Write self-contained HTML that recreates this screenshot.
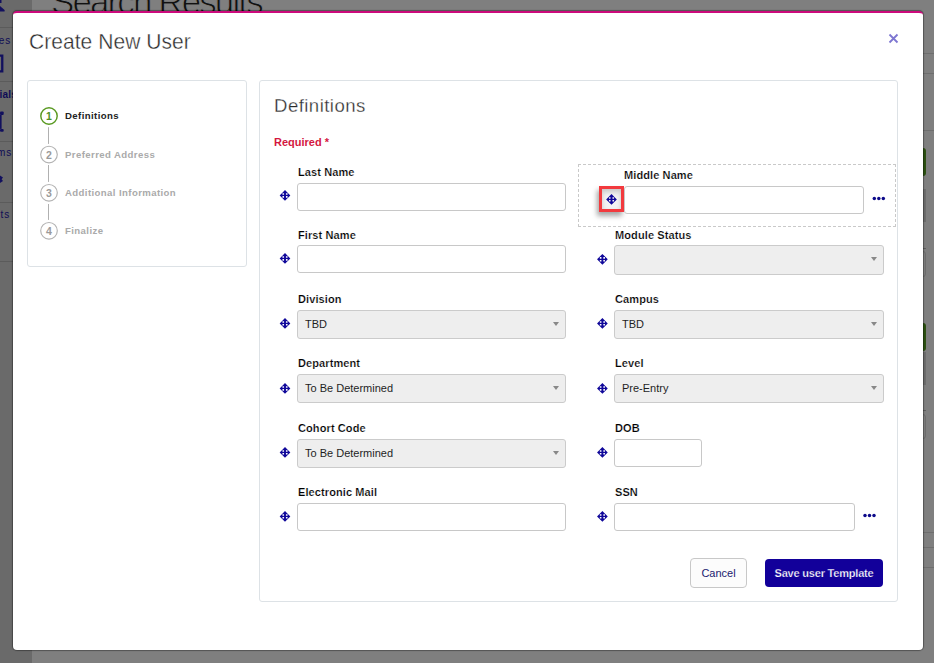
<!DOCTYPE html>
<html><head><meta charset="utf-8">
<style>
*{box-sizing:border-box;margin:0;padding:0}
html,body{width:934px;height:663px;overflow:hidden}
body{position:relative;background:#7f7f7f;font-family:"Liberation Sans",sans-serif;color:#333}
body>div,body>svg{position:absolute}
.abs{position:absolute}
#side{left:0;top:0;width:32px;height:663px;background:#6a6a6a}
.sl{left:0;width:32px;height:1px;background:#5b5b5b}
.st{font-size:10px;color:#0e0c55;white-space:nowrap;letter-spacing:0.8px;line-height:12px}
#search{left:51px;top:-17px;font-size:35px;line-height:38px;color:#111;white-space:nowrap;letter-spacing:-1.9px;-webkit-text-stroke:0.9px #7f7f7f}
.rl{left:923px;width:11px;height:1px;background:#6e6e6e}
#modal{left:13px;top:11px;width:910px;height:639px;background:#fff;border-top:2px solid #cc0a7c;border-radius:4px;box-shadow:0 0 1px 1px rgba(0,0,0,.35)}
#title{left:29px;top:28px;font-size:21px;color:#2a2a2a;white-space:nowrap;letter-spacing:0.05px;line-height:24px;-webkit-text-stroke:0.35px #fff;transform:scaleY(1.08);transform-origin:0 0}
#close{left:888px;top:33px}
#steps{left:27px;top:80px;width:220px;height:187px;border:1px solid #dde2e6;border-radius:3px}
.num{left:43px;width:12px;height:12px;font-size:10.5px;font-weight:bold;color:#9a9a9a;text-align:center;line-height:12px}
.num.on{color:#4f8f1f}
.stxt{left:65px;font-size:9.6px;font-weight:bold;color:#aaa;white-space:nowrap;line-height:12px;letter-spacing:0.4px}
.stxt.on{color:#222}
#panel{left:259px;top:80px;width:639px;height:522px;border:1px solid #dde2e6;border-radius:3px}
#deft{left:274px;top:96px;font-size:18.6px;color:#2a2a2a;white-space:nowrap;line-height:20px;letter-spacing:0.45px;-webkit-text-stroke:0.3px #fff}
#req{left:274px;top:136px;font-size:11px;font-weight:bold;color:#d4173f;white-space:nowrap;line-height:12px}
.lab{font-size:11px;font-weight:bold;color:#000;white-space:nowrap;line-height:12px;-webkit-text-stroke:0.2px #fff;letter-spacing:0.1px}
.inp{background:#fff;border:1px solid #c8c8c8;border-radius:3px}
.sel{background:#eee;border:1px solid #cbcbcb;border-radius:3px;font-size:11px;color:#1e1e1e;line-height:12px}
.sel span{position:absolute;left:7px;top:7px;white-space:nowrap}
.sel i{position:absolute;right:6px;top:11px;width:0;height:0;border-left:3px solid transparent;border-right:3px solid transparent;border-top:4px solid #888}
#dash{left:578px;top:164px;width:318px;height:63px;border:1px dashed #c9c9c9}
#redbox{left:599px;top:186px;width:25px;height:26px;border:3px solid #f23a3e;background:#f3f3f3;box-shadow:-2px 4px 5px rgba(0,0,0,.35), inset 0 3px 5px rgba(0,0,0,.18)}
#cancel{left:690px;top:558px;width:57px;height:30px;border:1px solid #c8c8c8;border-radius:4px;background:#fcfcfc;font-size:11px;color:#1b1b70;text-align:center;line-height:28px}
#save{left:765px;top:559px;width:118px;height:28px;border-radius:4px;background:#12009a;font-size:11px;font-weight:bold;color:#fff;text-align:center;line-height:28px;letter-spacing:-0.2px;-webkit-text-stroke:0.25px #12009a}

</style></head>
<body>
<div id="side"></div>
<div class="sl" style="top:27px"></div>
<div class="sl" style="top:81px"></div>
<div class="sl" style="top:141px"></div>
<div class="sl" style="top:202px"></div>
<div class="sl" style="top:261px"></div>
<div class="st" style="right:923px;top:35px">Cases</div>
<div class="st" style="right:917px;top:89px;font-weight:bold;letter-spacing:0.2px">Credentials</div>
<div class="st" style="right:922px;top:147px">Forms</div>
<div class="st" style="right:924px;top:209px">Reports</div>
<svg style="left:0;top:0" width="12" height="190">
<g fill="#12105e">
<rect x="0" y="0" width="1.5" height="3"/>
<path d="M0 6L4 9.5Q5.2 10.6 4.5 11.5H0Z"/>
<path d="M-8 54.5H3.4V72.5H-8V70.2H1.1V56.8H-8Z"/>
<rect x="0" y="111.5" width="3.7" height="3.4" rx="1"/>
<rect x="0" y="114.9" width="1.6" height="14"/>
<rect x="0" y="129" width="3.7" height="2.8" rx="1"/>
<path d="M0 175.5L3 177.5L1.6 179.2L3 181L0 183Z"/>
</g></svg>

<div id="search">Search Results</div>
<div class="rl" style="top:53px"></div>
<div class="rl" style="top:73px"></div>
<div class="rl" style="top:130px"></div>
<div class="rl" style="top:532px"></div>
<div class="rl" style="top:547px"></div>
<div class="rl" style="top:567px"></div>
<div class="abs" style="left:920px;top:248px;width:6px;height:1px;background:#5e5e5e"></div>
<div class="abs" style="left:920px;top:410px;width:6px;height:1px;background:#5e5e5e"></div>
<div class="abs" style="left:900px;top:251px;width:26px;height:26px;border:1px solid #6c6c6c;border-radius:3px"></div>
<div class="abs" style="left:900px;top:414px;width:26px;height:25px;border:1px solid #6c6c6c;border-radius:3px"></div>
<div class="abs" style="left:920px;top:148px;width:6px;height:28px;background:#2b5010;border-radius:3px"></div>
<div class="abs" style="left:920px;top:323px;width:6px;height:28px;background:#2b5010;border-radius:3px"></div>
<div class="abs" style="left:923px;top:189px;width:3px;height:33px;background:#6c6c6c"></div>
<div class="abs" style="left:923px;top:352px;width:3px;height:33px;background:#6c6c6c"></div>
<div id="modal"></div>
<div id="title">Create New User</div>
<svg id="close" width="11" height="11" viewBox="0 0 11 11"><path d="M1.5 1.5L9.5 9.5M9.5 1.5L1.5 9.5" stroke="#7d76d1" stroke-width="1.8"/></svg>
<div id="steps"></div>
<svg class="abs" style="left:30px;top:100px" width="40" height="150"><circle cx="19" cy="16.0" r="8.2" fill="none" stroke="#5a9a22" stroke-width="1.45"/><circle cx="19" cy="54.5" r="8.3" fill="none" stroke="#b3b3b3" stroke-width="1.15"/><circle cx="19" cy="92.80000000000001" r="8.3" fill="none" stroke="#b3b3b3" stroke-width="1.15"/><circle cx="19" cy="130.8" r="8.3" fill="none" stroke="#b3b3b3" stroke-width="1.15"/><rect x="18" y="27.2" width="1" height="16.7" fill="#b0b0b0"/><rect x="18" y="65.0" width="1" height="16.9" fill="#b0b0b0"/><rect x="18" y="104.0" width="1" height="15.9" fill="#b0b0b0"/></svg>
<div class="num on" style="top:110.0px">1</div>
<div class="num" style="top:148.5px">2</div>
<div class="num" style="top:186.8px">3</div>
<div class="num" style="top:224.8px">4</div>
<div class="stxt on" style="top:109.6px">Definitions</div>
<div class="stxt" style="top:148.6px">Preferred Address</div>
<div class="stxt" style="top:186.6px">Additional Information</div>
<div class="stxt" style="top:224.6px">Finalize</div>
<div id="panel"></div>
<div id="deft">Definitions</div>
<div id="req">Required *</div>
<div class="lab" style="left:298px;top:166px">Last Name</div>
<svg class="mv" style="left:278px;top:188px" width="14" height="14"><path fill-rule="evenodd" fill="#10089a" d="M7.00 2.10L12.35 7.45L7.00 12.80L1.65 7.45ZM4.45 5.25H6.05V6.85H4.45ZM4.45 8.05H6.05V9.65H4.45ZM7.95 5.25H9.55V6.85H7.95ZM7.95 8.05H9.55V9.65H7.95Z"/></svg>
<div class="inp" style="left:297px;top:183px;width:269px;height:28px"></div>
<div id="dash"></div>
<div class="lab" style="left:624px;top:169px">Middle Name</div>
<div id="redbox"></div>
<svg class="mv" style="left:604px;top:192px" width="14" height="14"><path fill-rule="evenodd" fill="#10089a" d="M7.50 2.05L12.85 7.40L7.50 12.75L2.15 7.40ZM4.95 5.20H6.55V6.80H4.95ZM4.95 8.00H6.55V9.60H4.95ZM8.45 5.20H10.05V6.80H8.45ZM8.45 8.00H10.05V9.60H8.45Z"/></svg>
<div class="inp" style="left:624px;top:186px;width:240px;height:28px"></div>
<svg class="dots" style="left:871px;top:195px" width="18" height="7"><g fill="#0d0a8a"><circle cx="3.30" cy="3.40" r="1.75"/><circle cx="7.80" cy="3.40" r="1.75"/><circle cx="12.30" cy="3.40" r="1.75"/></g></svg>
<div class="lab" style="left:298px;top:229px">First Name</div>
<svg class="mv" style="left:278px;top:251px" width="14" height="14"><path fill-rule="evenodd" fill="#10089a" d="M7.00 2.10L12.35 7.45L7.00 12.80L1.65 7.45ZM4.45 5.25H6.05V6.85H4.45ZM4.45 8.05H6.05V9.65H4.45ZM7.95 5.25H9.55V6.85H7.95ZM7.95 8.05H9.55V9.65H7.95Z"/></svg>
<div class="inp" style="left:297px;top:245px;width:269px;height:28px"></div>
<div class="lab" style="left:615px;top:229px">Module Status</div>
<svg class="mv" style="left:595px;top:252px" width="14" height="14"><path fill-rule="evenodd" fill="#10089a" d="M7.40 1.95L12.75 7.30L7.40 12.65L2.05 7.30ZM4.85 5.10H6.45V6.70H4.85ZM4.85 7.90H6.45V9.50H4.85ZM8.35 5.10H9.95V6.70H8.35ZM8.35 7.90H9.95V9.50H8.35Z"/></svg>
<div class="sel" style="left:614px;top:245px;width:270px;height:30px"><i></i></div>
<div class="lab" style="left:298px;top:293px">Division</div>
<svg class="mv" style="left:278px;top:316px" width="14" height="14"><path fill-rule="evenodd" fill="#10089a" d="M7.00 2.05L12.35 7.40L7.00 12.75L1.65 7.40ZM4.45 5.20H6.05V6.80H4.45ZM4.45 8.00H6.05V9.60H4.45ZM7.95 5.20H9.55V6.80H7.95ZM7.95 8.00H9.55V9.60H7.95Z"/></svg>
<div class="sel" style="left:297px;top:310px;width:269px;height:29px"><span>TBD</span><i></i></div>
<div class="lab" style="left:615px;top:293px">Campus</div>
<svg class="mv" style="left:595px;top:316px" width="14" height="14"><path fill-rule="evenodd" fill="#10089a" d="M7.40 2.05L12.75 7.40L7.40 12.75L2.05 7.40ZM4.85 5.20H6.45V6.80H4.85ZM4.85 8.00H6.45V9.60H4.85ZM8.35 5.20H9.95V6.80H8.35ZM8.35 8.00H9.95V9.60H8.35Z"/></svg>
<div class="sel" style="left:614px;top:310px;width:270px;height:29px"><span>TBD</span><i></i></div>
<div class="lab" style="left:298px;top:357px">Department</div>
<svg class="mv" style="left:278px;top:381px" width="14" height="14"><path fill-rule="evenodd" fill="#10089a" d="M7.00 2.10L12.35 7.45L7.00 12.80L1.65 7.45ZM4.45 5.25H6.05V6.85H4.45ZM4.45 8.05H6.05V9.65H4.45ZM7.95 5.25H9.55V6.85H7.95ZM7.95 8.05H9.55V9.65H7.95Z"/></svg>
<div class="sel" style="left:297px;top:374px;width:269px;height:29px"><span>To Be Determined</span><i></i></div>
<div class="lab" style="left:615px;top:357px">Level</div>
<svg class="mv" style="left:595px;top:381px" width="14" height="14"><path fill-rule="evenodd" fill="#10089a" d="M7.40 2.10L12.75 7.45L7.40 12.80L2.05 7.45ZM4.85 5.25H6.45V6.85H4.85ZM4.85 8.05H6.45V9.65H4.85ZM8.35 5.25H9.95V6.85H8.35ZM8.35 8.05H9.95V9.65H8.35Z"/></svg>
<div class="sel" style="left:614px;top:374px;width:270px;height:29px"><span>Pre-Entry</span><i></i></div>
<div class="lab" style="left:298px;top:422px">Cohort Code</div>
<svg class="mv" style="left:278px;top:445px" width="14" height="14"><path fill-rule="evenodd" fill="#10089a" d="M7.00 2.05L12.35 7.40L7.00 12.75L1.65 7.40ZM4.45 5.20H6.05V6.80H4.45ZM4.45 8.00H6.05V9.60H4.45ZM7.95 5.20H9.55V6.80H7.95ZM7.95 8.00H9.55V9.60H7.95Z"/></svg>
<div class="sel" style="left:297px;top:439px;width:269px;height:29px"><span>To Be Determined</span><i></i></div>
<div class="lab" style="left:615px;top:422px">DOB</div>
<svg class="mv" style="left:595px;top:445px" width="14" height="14"><path fill-rule="evenodd" fill="#10089a" d="M7.40 2.05L12.75 7.40L7.40 12.75L2.05 7.40ZM4.85 5.20H6.45V6.80H4.85ZM4.85 8.00H6.45V9.60H4.85ZM8.35 5.20H9.95V6.80H8.35ZM8.35 8.00H9.95V9.60H8.35Z"/></svg>
<div class="inp" style="left:614px;top:439px;width:88px;height:28px"></div>
<div class="lab" style="left:298px;top:486px">Electronic Mail</div>
<svg class="mv" style="left:278px;top:509px" width="14" height="14"><path fill-rule="evenodd" fill="#10089a" d="M7.00 2.05L12.35 7.40L7.00 12.75L1.65 7.40ZM4.45 5.20H6.05V6.80H4.45ZM4.45 8.00H6.05V9.60H4.45ZM7.95 5.20H9.55V6.80H7.95ZM7.95 8.00H9.55V9.60H7.95Z"/></svg>
<div class="inp" style="left:297px;top:503px;width:269px;height:28px"></div>
<div class="lab" style="left:615px;top:486px">SSN</div>
<svg class="mv" style="left:595px;top:509px" width="14" height="14"><path fill-rule="evenodd" fill="#10089a" d="M7.40 2.05L12.75 7.40L7.40 12.75L2.05 7.40ZM4.85 5.20H6.45V6.80H4.85ZM4.85 8.00H6.45V9.60H4.85ZM8.35 5.20H9.95V6.80H8.35ZM8.35 8.00H9.95V9.60H8.35Z"/></svg>
<div class="inp" style="left:614px;top:503px;width:241px;height:28px"></div>
<svg class="dots" style="left:862px;top:512px" width="18" height="7"><g fill="#0d0a8a"><circle cx="3.00" cy="3.40" r="1.75"/><circle cx="7.50" cy="3.40" r="1.75"/><circle cx="12.00" cy="3.40" r="1.75"/></g></svg>
<div id="cancel">Cancel</div>
<div id="save">Save user Template</div>
</body></html>
